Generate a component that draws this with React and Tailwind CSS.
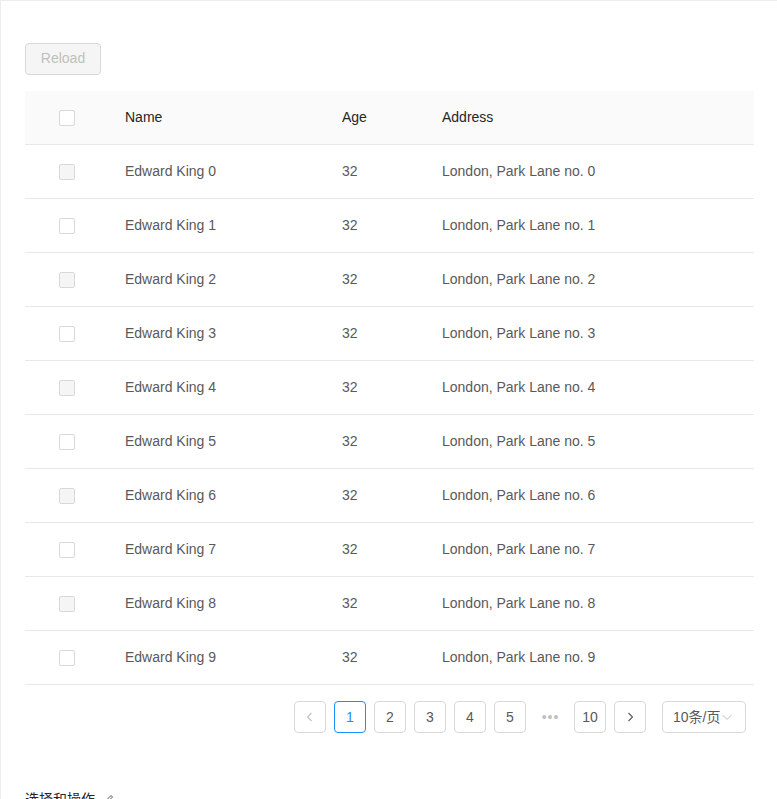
import React from "react";

const rows = Array.from({ length: 10 }, (_, i) => i);

function Checkbox({ disabled }) {
  return (
    <span
      className={
        "block w-4 h-4 rounded-[2px] border border-[#d9d9d9] " +
        (disabled ? "bg-[#f5f5f5]" : "bg-white")
      }
    />
  );
}

function Left({ color }) {
  return (
    <svg width="12" height="12" viewBox="0 0 12 12" fill="none">
      <path d="M7.5 2 L3.5 6 L7.5 10" stroke={color} strokeWidth="1.1" />
    </svg>
  );
}
function Right({ color }) {
  return (
    <svg width="12" height="12" viewBox="0 0 12 12" fill="none">
      <path d="M4.5 2 L8.5 6 L4.5 10" stroke={color} strokeWidth="1.1" />
    </svg>
  );
}

export default function App() {
  return (
    <div
      className="w-[777px] h-[799px] overflow-hidden bg-white"
      style={{ fontFamily: '"Liberation Sans", "Noto Sans CJK SC", sans-serif' }}
    >
      <div className="border-l border-t border-[#ebedf0] pt-[42px] pl-6 pr-[23px]">
        <button
          disabled
          className="h-8 w-[76px] rounded-[4px] border border-[#d9d9d9] bg-[#f5f5f5] text-[14px] text-[#bfbfbf] leading-[28px] pb-[2px]"
        >
          Reload
        </button>

        <div className="mt-4 text-[14px]">
          <div className="flex h-[54px] items-center bg-[#fafafa] border-b border-[#e8e8e8] text-[#262626]">
            <div className="w-[84px] flex justify-center">
              <Checkbox />
            </div>
            <div className="w-[217px] pl-4">Name</div>
            <div className="w-[100px] pl-4">Age</div>
            <div className="flex-1 pl-4">Address</div>
          </div>
          {rows.map((i) => (
            <div
              key={i}
              className="flex h-[54px] items-center border-b border-[#e8e8e8] text-[#595959]"
            >
              <div className="w-[84px] flex justify-center">
                <Checkbox disabled={i % 2 === 0} />
              </div>
              <div className="w-[217px] pl-4">Edward King {i}</div>
              <div className="w-[100px] pl-4">32</div>
              <div className="flex-1 pl-4">London, Park Lane no. {i}</div>
            </div>
          ))}
        </div>

        <div className="mt-4 flex justify-end pr-2 text-[14px] text-[#595959]">
          <div className="flex items-center gap-2">
            <span className="w-8 h-8 rounded-[4px] border border-[#d9d9d9] flex items-center justify-center">
              <Left color="#bfbfbf" />
            </span>
            <span className="w-8 h-8 rounded-[4px] border border-[#1890ff] text-[#1890ff] flex items-center justify-center">
              1
            </span>
            {[2, 3, 4, 5].map((n) => (
              <span
                key={n}
                className="w-8 h-8 rounded-[4px] border border-[#d9d9d9] flex items-center justify-center"
              >
                {n}
              </span>
            ))}
            <span className="w-8 h-8 flex items-center justify-center text-[#bfbfbf] text-[14px] tracking-[1px] pl-px">
              •••
            </span>
            <span className="w-8 h-8 rounded-[4px] border border-[#d9d9d9] flex items-center justify-center">
              10
            </span>
            <span className="w-8 h-8 rounded-[4px] border border-[#d9d9d9] flex items-center justify-center">
              <Right color="#595959" />
            </span>
            <span className="ml-2 w-[84px] h-8 rounded-[4px] border border-[#d9d9d9] flex items-center pl-[10px] pr-[12px] justify-between">
              <span>10条/页</span>
              <svg width="12" height="12" viewBox="0 0 12 12" fill="none">
                <path d="M1.5 4 L6 8.5 L10.5 4" stroke="#bfbfbf" strokeWidth="1" />
              </svg>
            </span>
          </div>
        </div>

        <div className="mt-[55px] flex items-center gap-2 text-[14px] leading-[22px] text-[#262626]">
          <span>选择和操作</span>
          <svg width="12" height="12" viewBox="0 0 12 12" fill="none" className="text-[#595959]">
            <path d="M2 10 L2.5 8 L8 2.5 L9.5 4 L4 9.5 Z" stroke="currentColor" strokeWidth="1" />
          </svg>
        </div>
      </div>
    </div>
  );
}
